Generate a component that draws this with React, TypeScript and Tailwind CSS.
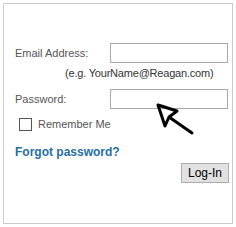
export default function App() {
  return (
    <div className="relative h-[227px] w-[236px] bg-white font-['Liberation_Sans',Arial,sans-serif]">
      <div className="ml-[3px] mt-[3px] h-[221px] w-[230px] border border-[#cccccc] pl-[11px] pr-[4px] pt-[39px]">
        <div className="flex h-[20px] items-center justify-between">
          <span className="text-[11px] leading-[14px] text-[#555555]">Email Address:</span>
          <input type="text" className="h-[20px] w-[118px] border border-[#a9a9a9] bg-white outline-none" />
        </div>
        <p className="ml-[50px] mt-[3px] text-[11px] leading-[14px] tracking-[-0.2px] text-[#333333]">
          (e.g. YourName@Reagan.com)
        </p>
        <div className="mt-[9px] flex h-[20px] items-center justify-between">
          <span className="text-[11px] leading-[14px] text-[#555555]">Password:</span>
          <input type="password" className="h-[20px] w-[118px] border border-[#a9a9a9] bg-white outline-none" />
        </div>
        <label className="ml-[4px] mt-[8px] flex items-center gap-[6px]">
          <span className="h-[13px] w-[13px] border border-[#555555] bg-white" />
          <span className="text-[11px] leading-[14px] text-[#555555]">Remember Me</span>
        </label>
        <a href="#" className="mt-[14px] block text-[12px] font-bold leading-[14px] text-[#1f6fa0]">
          Forgot password?
        </a>
        <div className="mt-[4px] flex justify-end">
          <button className="-mr-[1px] h-[20px] w-[48px] border border-[#adadad] bg-[#e1e1e1] text-[12px] leading-[14px] text-black">
            Log-In
          </button>
        </div>
      </div>
      <svg className="absolute left-0 top-0" width="236" height="227" viewBox="0 0 236 227" fill="none">
        <path
          d="M158 102 L177 108 L169 114 L165 123 Z M169 114 L192 130"
          stroke="black"
          strokeWidth="3"
          strokeLinecap="round"
          strokeLinejoin="round"
        />
      </svg>
    </div>
  );
}
